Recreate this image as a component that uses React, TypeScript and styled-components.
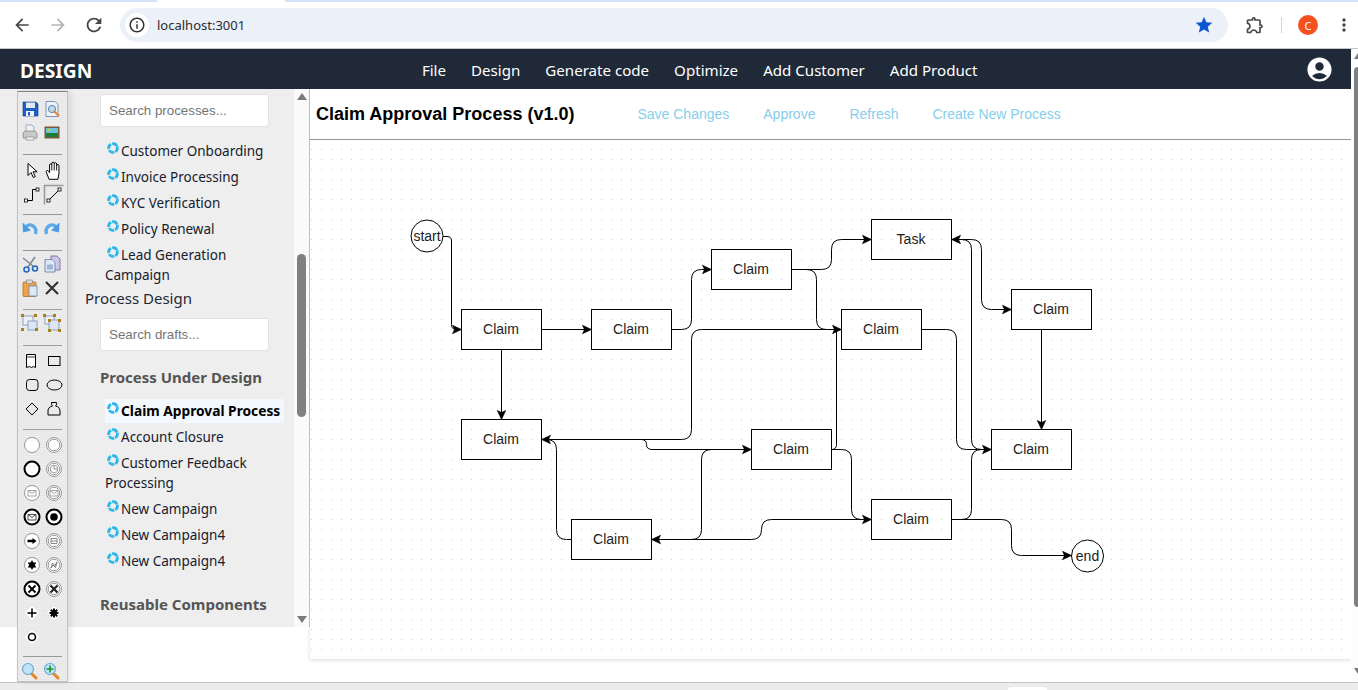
import React from 'react';
import styled, { createGlobalStyle } from 'styled-components';
import {
  MdArrowBack,
  MdArrowForward,
  MdRefresh,
  MdInfoOutline,
  MdStar,
  MdOutlineExtension,
  MdMoreVert,
  MdAccountCircle,
} from 'react-icons/md';

const GlobalStyle = createGlobalStyle`
  html, body {
    margin: 0;
    padding: 0;
    height: 690px;
    overflow: hidden;
    background: #fff;
  }
  * { box-sizing: border-box; }
`;

const NAV_LINKS = ['File', 'Design', 'Generate code', 'Optimize', 'Add Customer', 'Add Product'];
const ACTIONS = ['Save Changes', 'Approve', 'Refresh', 'Create New Process'];
const PROCESSES = [
  'Customer Onboarding',
  'Invoice Processing',
  'KYC Verification',
  'Policy Renewal',
  'Lead Generation Campaign',
];
const DRAFTS = [
  'Claim Approval Process',
  'Account Closure',
  'Customer Feedback Processing',
  'New Campaign',
  'New Campaign4',
  'New Campaign4',
];

/* toolbar icons */
const I = styled.svg.attrs({ viewBox: '0 0 20 20', width: 20, height: 20 })`
  display: block;
  overflow: visible;
`;

const thin = { fill: 'none', stroke: '#9a9a9a', strokeWidth: 1 };
const bold = { fill: 'none', stroke: '#000', strokeWidth: 1 };

const Ev = ({ ring, children }: { ring: 'thin' | 'double' | 'thick'; children?: React.ReactNode }) => (
  <I>
    <circle cx="10" cy="10" r="7.5" fill="#fff" stroke={ring === 'thick' ? '#000' : '#999'} strokeWidth={ring === 'thick' ? 2 : 1} />
    {ring === 'double' && <circle cx="10" cy="10" r="5.8" fill="none" stroke="#999" strokeWidth="1" />}
    {children}
  </I>
);

const Envelope = ({ color }: { color: string }) => (
  <path d="M6 7.5h8v5.5H6zM6 7.5l4 3 4-3" fill="none" stroke={color} strokeWidth="0.9" />
);

const Gw = ({ children }: { children: React.ReactNode }) => (
  <I>
    <path d="M10 2l8 8-8 8-8-8z" fill="#fff" stroke="#e4e4e4" strokeWidth="1" />
    {children}
  </I>
);

const Zoom = ({ plus }: { plus?: boolean }) => (
  <I>
    <path d="M11 12l5 5" stroke="#e8862a" strokeWidth="3" strokeLinecap="round" />
    <circle cx="8" cy="8" r="5.5" fill="#bfe3f7" stroke="#6fa8cf" strokeWidth="1.2" />
    {plus && <path d="M8 4.5v7M4.5 8h7" stroke="#0a9a1e" strokeWidth="1.6" />}
  </I>
);

type ToolRowData = { left?: boolean; icons: React.ReactNode[] };

const TOOL_ROWS: ToolRowData[] = [
  {
    left: true,
    icons: [
      <I key="save">
        <path d="M3 3h13l2 2v12H3z" fill="#1f5fc4" stroke="#123f8c" strokeWidth="0.6" />
        <rect x="6" y="3.5" width="9" height="5.5" fill="#dfe7f2" />
        <rect x="6" y="12" width="8" height="5" fill="#f0f4fa" />
        <rect x="8" y="13" width="2" height="3.5" fill="#1f5fc4" />
      </I>,
      <I key="preview">
        <path d="M4 2.5h9l3 3v12H4z" fill="#eef3fa" stroke="#7f93bb" strokeWidth="1" />
        <circle cx="10" cy="10" r="3.6" fill="#bcd9ee" stroke="#5d86ad" strokeWidth="1" />
        <path d="M12.5 12.5l4 4" stroke="#e8862a" strokeWidth="2" strokeLinecap="round" />
      </I>,
    ],
  },
  {
    left: true,
    icons: [
      <I key="print">
        <path d="M6 2h6l2 2v5H6z" fill="#eef1f6" stroke="#8f9bb0" strokeWidth="0.8" />
        <path d="M3 10l2-2h10l2 2v5H3z" fill="#c9c9c9" stroke="#8a8a8a" strokeWidth="0.8" />
        <path d="M6 14h8v3H6z" fill="#f2f2f2" stroke="#888" strokeWidth="0.7" />
      </I>,
      <I key="image">
        <rect x="2.5" y="3.5" width="15" height="12" fill="#7a5a3a" />
        <rect x="4" y="5" width="12" height="5.5" fill="#6bc3d8" />
        <rect x="4" y="10" width="12" height="4" fill="#1f7a3b" />
        <circle cx="7" cy="7" r="1.2" fill="#f0c020" />
      </I>,
    ],
  },
  {
    icons: [
      <I key="pointer">
        <path d="M6 2.5v12l3-3 2.3 5 2-.9-2.3-4.8h4.2z" fill="#fff" stroke="#000" strokeWidth="1" />
      </I>,
      <I key="hand">
        <g transform="translate(-1 -1.5) scale(1.1)">
          <path
            d="M5.5 18L3 11.5c-.5-1.5 1-2 2-1l1 1.5V5c0-1.5 2-1.5 2 0V3.5c0-1.5 2.2-1.5 2.2 0V4c0-1.5 2.2-1.5 2.2 0v1.5c0-1.3 2.1-1.3 2.1 0V13l-1 5z"
            fill="#fff"
            stroke="#000"
            strokeWidth="0.9"
          />
          <path d="M8 5v5M10.2 4v6M12.4 5v5" stroke="#000" strokeWidth="0.8" />
        </g>
      </I>,
    ],
  },
  {
    icons: [
      <I key="connector">
        <path d="M4 15.5H10.5V4.5H15" {...bold} />
        <rect x="2.5" y="14" width="3" height="3" fill="#fff" stroke="#000" strokeWidth="0.8" />
        <rect x="14" y="3" width="3" height="3" fill="#fff" stroke="#000" strokeWidth="0.8" />
      </I>,
      <I key="diagonal">
        <path d="M0.5 19.5V0.5H19.5" fill="none" stroke="#999" strokeWidth="1.5" />
        <path d="M4.5 15.5L15.5 4.5" {...bold} />
        <rect x="3" y="14" width="3" height="3" fill="#fff" stroke="#000" strokeWidth="0.8" />
        <rect x="14" y="3" width="3" height="3" fill="#fff" stroke="#000" strokeWidth="0.8" />
      </I>,
    ],
  },
  {
    left: true,
    icons: [
      <I key="undo">
        <path d="M15.5 16C17.5 9 11 4.5 6 8.5" fill="none" stroke="#5aa9ea" strokeWidth="3.4" />
        <path d="M2.5 4.5L3 14.5L11 12.5Z" fill="#4a9ce4" />
      </I>,
      <I key="redo">
        <path d="M4.5 16C2.5 9 9 4.5 14 8.5" fill="none" stroke="#5aa9ea" strokeWidth="3.4" />
        <path d="M17.5 4.5L17 14.5L9 12.5Z" fill="#4a9ce4" />
      </I>,
    ],
  },
  {
    left: true,
    icons: [
      <I key="cut">
        <path d="M3 4l10 8M15 3L8 13" stroke="#7d8794" strokeWidth="1.5" />
        <circle cx="15" cy="14.5" r="2.5" fill="none" stroke="#2468c0" strokeWidth="1.6" />
        <circle cx="6.5" cy="15.5" r="2.5" fill="none" stroke="#2468c0" strokeWidth="1.6" />
      </I>,
      <I key="copy">
        <path d="M9 2h6l3 3v11H9z" fill="#cfc6e6" stroke="#7a6aa8" strokeWidth="0.9" />
        <path d="M3 5.5h7l3 3V18H3z" fill="#dfe8f5" stroke="#6f84ad" strokeWidth="0.9" />
        <rect x="5" y="10.5" width="6" height="5" fill="#9fb4d6" />
      </I>,
    ],
  },
  {
    left: true,
    icons: [
      <I key="paste">
        <rect x="3" y="4" width="13" height="14.5" rx="1" fill="#f0a24a" stroke="#b86d1e" strokeWidth="0.8" />
        <rect x="6.5" y="2" width="6" height="3.5" fill="#d9d9d9" stroke="#888" strokeWidth="0.7" />
        <rect x="9" y="8" width="8" height="10" fill="#dfe8f5" stroke="#6f84ad" strokeWidth="0.8" />
      </I>,
      <I key="delete">
        <path d="M4 4l12 12M16 4L4 16" stroke="#333" strokeWidth="2.2" />
      </I>,
    ],
  },
  {
    left: true,
    icons: [
      <I key="group">
        <rect x="3" y="3" width="10" height="9" fill="#eef2f8" stroke="#8fa0bf" strokeWidth="1" />
        <rect x="8" y="8" width="9" height="9" fill="#dce6f4" stroke="#8fa0bf" strokeWidth="1" />
        {[[1, 1], [14, 1], [1, 15], [15, 15]].map(([x, y]) => (
          <rect key={`${x}${y}`} x={x} y={y} width="3" height="3" fill="#a8801a" />
        ))}
      </I>,
      <I key="ungroup">
        <rect x="3" y="3" width="9" height="8" fill="#eef2f8" stroke="#8fa0bf" strokeWidth="1" />
        <rect x="7" y="7" width="10" height="10" fill="#dce6f4" stroke="#8fa0bf" strokeWidth="1" />
        {[[1, 1], [11, 1], [6, 6], [16, 6], [6, 16], [16, 16]].map(([x, y]) => (
          <rect key={`${x}${y}`} x={x} y={y} width="3" height="3" fill="#a8801a" />
        ))}
      </I>,
    ],
  },
  {
    icons: [
      <I key="note">
        <path d="M4.5 3.5h9v13l-2-1-2 1-2-1-3 1z" fill="#fff" stroke="#000" strokeWidth="1" />
        <path d="M4.5 6h9" stroke="#000" strokeWidth="0.8" />
      </I>,
      <I key="rect">
        <rect x="4.5" y="5.5" width="11.5" height="9" {...bold} />
      </I>,
    ],
  },
  {
    icons: [
      <I key="rounded">
        <rect x="4.5" y="4.5" width="11.5" height="11" rx="3" {...bold} />
      </I>,
      <I key="ellipse">
        <ellipse cx="10.5" cy="10" rx="7.5" ry="5" {...bold} />
      </I>,
    ],
  },
  {
    icons: [
      <I key="diamond">
        <path d="M10 4l6 6-6 6-6-6z" {...bold} />
      </I>,
      <I key="actor">
        <path d="M7 3.5h5c.5 2-.5 3-1 3.5 3 .5 4.5 2.5 4.5 5v4h-12v-4c0-2.5 1.5-4.5 4.5-5-.5-.5-1.5-1.5-.5-3.5z" transform="translate(0.5 0)" {...bold} />
      </I>,
    ],
  },
  { icons: [<Ev key="e1" ring="thin" />, <Ev key="e2" ring="double" />] },
  {
    icons: [
      <Ev key="e3" ring="thick" />,
      <Ev key="e4" ring="double">
        <path d="M10 6.5V10h3" fill="none" stroke="#888" strokeWidth="1" />
        <circle cx="10" cy="10" r="3.8" {...thin} />
      </Ev>,
    ],
  },
  {
    icons: [
      <Ev key="e5" ring="thin">
        <Envelope color="#999" />
      </Ev>,
      <Ev key="e6" ring="double">
        <Envelope color="#999" />
      </Ev>,
    ],
  },
  {
    icons: [
      <Ev key="e7" ring="thick">
        <Envelope color="#333" />
      </Ev>,
      <Ev key="e8" ring="thick">
        <circle cx="10" cy="10" r="3.8" fill="#000" />
      </Ev>,
    ],
  },
  {
    icons: [
      <Ev key="e9" ring="thin">
        <path d="M5.5 8.8h5V7l4 3-4 3v-1.8h-5z" fill="#000" />
      </Ev>,
      <Ev key="e10" ring="double">
        <path d="M7 7.5h6v5H7zM7 10h6" fill="none" stroke="#888" strokeWidth="1" />
      </Ev>,
    ],
  },
  {
    icons: [
      <Ev key="e11" ring="thin">
        <path d="M10 5l1.4 2.5 2.9 0-1.5 2.5 1.5 2.5-2.9 0L10 15l-1.4-2.5-2.9 0L7.2 10 5.7 7.5l2.9 0z" fill="#000" />
      </Ev>,
      <Ev key="e12" ring="double">
        <path d="M7 13l1.5-5 2.5 2.5L13 7l-1.5 5.5L9 10z" fill="none" stroke="#777" strokeWidth="1" />
      </Ev>,
    ],
  },
  {
    icons: [
      <Ev key="e13" ring="thick">
        <path d="M6.5 6.5l7 7M13.5 6.5l-7 7" stroke="#000" strokeWidth="1.8" />
      </Ev>,
      <Ev key="e14" ring="double">
        <path d="M6.5 6.5l7 7M13.5 6.5l-7 7" stroke="#222" strokeWidth="2.2" />
      </Ev>,
    ],
  },
  {
    icons: [
      <Gw key="g1">
        <path d="M10 5.5v9M5.5 10h9" stroke="#000" strokeWidth="1.5" />
      </Gw>,
      <Gw key="g2">
        <path d="M10 5.5v9M5.5 10h9M6.8 6.8l6.4 6.4M13.2 6.8l-6.4 6.4" stroke="#000" strokeWidth="2" />
      </Gw>,
    ],
  },
  {
    icons: [
      <Gw key="g3">
        <circle cx="10" cy="10" r="3.5" fill="#fff" stroke="#000" strokeWidth="1.6" />
      </Gw>,
    ],
  },
  { left: true, icons: [<Zoom key="z1" />, <Zoom key="z2" plus />] },
];

/* index of the row under a rule: [gap above the rule, gap below it] */
const RULES: Record<number, [number, number]> = {
  2: [9, 4],
  4: [7, 1],
  5: [10, 1],
  7: [9, 1],
  8: [10, 3],
  11: [8, 3],
  20: [7, 2],
};

/* diagram */
const NODES = [
  { x: 461.5, y: 309.5, label: 'Claim' },
  { x: 591.5, y: 309.5, label: 'Claim' },
  { x: 711.5, y: 249.5, label: 'Claim' },
  { x: 871.5, y: 219.5, label: 'Task' },
  { x: 841.5, y: 309.5, label: 'Claim' },
  { x: 1011.5, y: 289.5, label: 'Claim' },
  { x: 461.5, y: 419.5, label: 'Claim' },
  { x: 751.5, y: 429.5, label: 'Claim' },
  { x: 991.5, y: 429.5, label: 'Claim' },
  { x: 571.5, y: 519.5, label: 'Claim' },
  { x: 871.5, y: 499.5, label: 'Claim' },
];

const EDGES = [
  'M443 236.5H447Q451.5 236.5 451.5 241V324.5Q451.5 329.5 456 329.5H461',
  'M541.5 329.5H591',
  'M501.5 349.5V419',
  'M671.5 329.5H681.5Q691.5 329.5 691.5 319.5V279.5Q691.5 269.5 701.5 269.5H711',
  'M791.5 269.5H821.5Q831.5 269.5 831.5 259.5V249.5Q831.5 239.5 841.5 239.5H871',
  'M791.5 269.5H806.5Q816.5 269.5 816.5 279.5V319.5Q816.5 329.5 826.5 329.5H841',
  'M841.5 329.5H701.5Q691.5 329.5 691.5 339.5V429.5Q691.5 439.5 681.5 439.5H541.5',
  'M831.5 449.5Q836.5 449.5 836.5 444.5V329.5',
  'M541.5 439.5H641Q646.5 439.5 646.5 444.5Q646.5 449.5 652 449.5H751',
  'M571.5 539.5H566.5Q556.5 539.5 556.5 529.5V449.5Q556.5 439.5 546.5 439.5H541.5',
  'M751.5 449.5H711.5Q701.5 449.5 701.5 459.5V529.5Q701.5 539.5 691.5 539.5H651.5',
  'M871.5 519.5H771.5Q761.5 519.5 761.5 529.5Q761.5 539.5 751.5 539.5H651.5',
  'M831.5 449.5H841.5Q851.5 449.5 851.5 459.5V509.5Q851.5 519.5 861.5 519.5H871',
  'M921.5 329.5H946.5Q956.5 329.5 956.5 339.5V439.5Q956.5 449.5 966.5 449.5H991',
  'M951.5 239.5H961.5Q971.5 239.5 971.5 249.5V439.5Q971.5 449.5 981.5 449.5H991',
  'M951.5 239.5H971.5Q981.5 239.5 981.5 249.5V299.5Q981.5 309.5 991.5 309.5H1011',
  'M1041.5 329.5V429',
  'M951.5 519.5H961.5Q971.5 519.5 971.5 509.5V459.5Q971.5 449.5 981.5 449.5H991',
  'M951.5 519.5H1001.5Q1011.5 519.5 1011.5 529.5V545.5Q1011.5 555.5 1021.5 555.5H1071',
];

/* tip x, tip y, rotation in degrees */
const ARROWS: [number, number, number][] = [
  [461.5, 329.5, 0],
  [591.5, 329.5, 0],
  [501.5, 419.5, 90],
  [711.5, 269.5, 0],
  [871.5, 239.5, 0],
  [841.5, 329.5, 0],
  [541.5, 439.5, 180],
  [751.5, 449.5, 0],
  [651.5, 539.5, 180],
  [871.5, 519.5, 0],
  [951.5, 239.5, 180],
  [1011.5, 309.5, 0],
  [1041.5, 429.5, 90],
  [991.5, 449.5, 0],
  [1071.5, 555.5, 0],
];

export default function App() {
  return (
    <Page>
      <GlobalStyle />
      <TabStrip />
      <BrowserBar>
        <RoundButton>
          <MdArrowBack size={20} color="#474747" />
        </RoundButton>
        <RoundButton>
          <MdArrowForward size={20} color="#b4b4b4" />
        </RoundButton>
        <RoundButton>
          <MdRefresh size={22} color="#474747" />
        </RoundButton>
        <AddressPill>
          <InfoBadge>
            <MdInfoOutline size={18} color="#333" />
          </InfoBadge>
          <Url>localhost:3001</Url>
          <MdStar size={20} color="#0b57d0" />
        </AddressPill>
        <Extension>
          <MdOutlineExtension size={20} color="#474747" />
        </Extension>
        <BarDivider />
        <Avatar>C</Avatar>
        <MenuDots>
          <MdMoreVert size={20} color="#474747" />
        </MenuDots>
      </BrowserBar>

      <Viewport>
        <Content>
          <Nav>
            <Logo>DESIGN</Logo>
            <NavLinks>
              {NAV_LINKS.map(link => (
                <NavLink key={link}>{link}</NavLink>
              ))}
            </NavLinks>
            <MdAccountCircle size={29} color="#fff" />
          </Nav>

          <Main>
            <LeftPane>
              <Sidebar>
                <SearchBox placeholder="Search processes..." readOnly />
                <ItemList $top={14}>
                  {PROCESSES.map(name => (
                    <Item key={name}>
                      <ProcessIcon />
                      {name}
                    </Item>
                  ))}
                </ItemList>
                <PanelTitle>Process Design</PanelTitle>
                <SearchBox $top={10} placeholder="Search drafts..." readOnly />
                <SectionTitle $top={15}>Process Under Design</SectionTitle>
                <ItemList $top={13}>
                  {DRAFTS.map((name, i) => (
                    <Item key={`${name}${i}`} $active={i === 0}>
                      <ProcessIcon />
                      {name}
                    </Item>
                  ))}
                </ItemList>
                <SectionTitle $top={22}>Reusable Components</SectionTitle>
              </Sidebar>
              <SideScroll>
                <ArrowUp />
                <SideThumb />
                <ArrowDown />
              </SideScroll>
              <Palette>
                {TOOL_ROWS.map((row, i) => (
                  <React.Fragment key={i}>
                    {RULES[i] && <Rule $above={RULES[i][0]} $below={RULES[i][1]} />}
                    <ToolRow $left={row.left}>
                      {row.icons.map((icon, j) => (
                        <ToolCell key={j}>{icon}</ToolCell>
                      ))}
                    </ToolRow>
                  </React.Fragment>
                ))}
              </Palette>
            </LeftPane>

            <Editor>
              <EditorHeader>
                <ProcessTitle>Claim Approval Process (v1.0)</ProcessTitle>
                <Actions>
                  {ACTIONS.map(action => (
                    <ActionLink key={action}>{action}</ActionLink>
                  ))}
                </Actions>
              </EditorHeader>
              <GraphArea>
                <svg width="1041" height="519" viewBox="310 140 1041 519" style={{ display: 'block' }}>
                  <defs>
                    <pattern id="grid" x="1" y="9" width="10" height="10" patternUnits="userSpaceOnUse">
                      <rect width="1" height="1" fill="#cfcfcf" />
                    </pattern>
                  </defs>
                  <rect x="310" y="140" width="1032" height="519" fill="url(#grid)" />
                  {EDGES.map(d => (
                    <path key={d} d={d} fill="none" stroke="#000" strokeWidth="1" />
                  ))}
                  {ARROWS.map(([x, y, r], i) => (
                    <path key={i} d="M0 0L-9 -4.2L-7 0L-9 4.2Z" transform={`translate(${x} ${y}) rotate(${r})`} fill="#000" stroke="#000" strokeWidth="0.6" />
                  ))}
                  <circle cx="427" cy="236" r="16" fill="#fff" stroke="#000" />
                  <DiagramText x="427" y="241">start</DiagramText>
                  <circle cx="1087.5" cy="556" r="16" fill="#fff" stroke="#000" />
                  <DiagramText x="1087.5" y="561">end</DiagramText>
                  {NODES.map(n => (
                    <g key={`${n.x}-${n.y}`}>
                      <rect x={n.x} y={n.y} width="80" height="40" fill="none" stroke="#000" />
                      <DiagramText x={n.x + 39.5} y={n.y + 24}>{n.label}</DiagramText>
                    </g>
                  ))}
                </svg>
              </GraphArea>
            </Editor>
          </Main>
        </Content>
        <PageScroll>
          <PageArrowUp />
          <PageThumb />
          <PageArrowDown />
        </PageScroll>
      </Viewport>

      <BottomBar>
        <TaskStub />
      </BottomBar>
    </Page>
  );
}

function ProcessIcon() {
  return (
    <ItemGlyph viewBox="0 0 12 12">
      <g transform="rotate(-18 6 6)">
        <circle cx="6" cy="6" r="4.3" fill="none" stroke="#2ab7ea" strokeWidth="2.8" strokeDasharray="5.6 1.15" />
      </g>
    </ItemGlyph>
  );
}

const Page = styled.div`
  width: 1358px;
  height: 690px;
  display: flex;
  flex-direction: column;
  overflow: hidden;
  background: #fff;
  font-family: 'Noto Sans', sans-serif;
`;

const TabStrip = styled.div`
  height: 2px;
  flex-shrink: 0;
  background: linear-gradient(
    to right,
    #d3e3fd 0 157px,
    #fff 157px 285px,
    #d3e3fd 285px
  );
`;

const BrowserBar = styled.div`
  height: 47px;
  flex-shrink: 0;
  display: flex;
  align-items: center;
  padding-left: 4px;
  background: #fff;
  border-bottom: 1px solid #c7c7c7;
`;

const RoundButton = styled.div`
  width: 36px;
  height: 36px;
  display: flex;
  align-items: center;
  justify-content: center;
`;

const AddressPill = styled.div`
  width: 1108px;
  height: 34px;
  margin-left: 8px;
  padding: 0 14px 0 5px;
  display: flex;
  align-items: center;
  background: #ebf0f9;
  border-radius: 17px;
`;

const InfoBadge = styled.div`
  width: 24px;
  height: 24px;
  display: flex;
  align-items: center;
  justify-content: center;
  background: #fff;
  border-radius: 50%;
`;

const Url = styled.span`
  flex: 1;
  margin-left: 8px;
  font-size: 13px;
  color: #2c2c2c;
`;

const Extension = styled.div`
  margin-left: 17px;
  display: flex;
`;

const BarDivider = styled.div`
  width: 1px;
  height: 16px;
  margin-left: 16px;
  background: #c7d8f5;
`;

const Avatar = styled.div`
  width: 20px;
  height: 20px;
  margin-left: 16px;
  display: flex;
  align-items: center;
  justify-content: center;
  border-radius: 50%;
  background: #f4511e;
  color: #fff;
  font-size: 11px;
`;

const MenuDots = styled.div`
  margin-left: 16px;
  display: flex;
`;

const Viewport = styled.div`
  height: 633px;
  flex-shrink: 0;
  display: flex;
`;

const Content = styled.div`
  width: 1351px;
  display: flex;
  flex-direction: column;
`;

const Nav = styled.nav`
  height: 40px;
  flex-shrink: 0;
  display: flex;
  align-items: center;
  justify-content: space-between;
  padding: 0 17px 0 20px;
  background: #1f2937;
`;

const Logo = styled.div`
  padding-top: 2px;
  font-size: 19.2px;
  font-weight: 700;
  color: #fff;
`;

const NavLinks = styled.div`
  display: flex;
  gap: 25px;
  padding: 1px 0 0 2px;
`;

const NavLink = styled.span`
  font-size: 15.1px;
  color: #fff;
`;

const Main = styled.div`
  flex: 1;
  display: flex;
  align-items: flex-start;
`;

const LeftPane = styled.div`
  position: relative;
  width: 310px;
  height: 538px;
  flex-shrink: 0;
  display: flex;
`;

const Sidebar = styled.aside`
  width: 294px;
  padding: 5px 0 0 85px;
  overflow: hidden;
  background: #eeeeee;
`;

const SearchBox = styled.input<{ $top?: number }>`
  display: block;
  width: 169px;
  height: 33px;
  margin: ${props => props.$top ?? 0}px 0 0 15px;
  padding: 0 8px;
  border: 1px solid #e2e2e2;
  border-radius: 3px;
  outline: none;
  background: #fff;
  font-family: 'Liberation Sans', Arial, sans-serif;
  font-size: 13.33px;

  &::placeholder {
    color: #757575;
  }
`;

const ItemList = styled.ul<{ $top: number }>`
  list-style: none;
  width: 179px;
  margin: ${props => props.$top}px 0 0 20px;
  padding: 0;
`;

const Item = styled.li<{ $active?: boolean }>`
  margin-bottom: ${props => (props.$active ? '4px' : '6px')};
  margin-top: ${props => (props.$active ? '-2px' : '0')};
  padding: ${props => (props.$active ? '2px 0' : '0')};
  background: ${props => (props.$active ? '#f2f8fd' : 'transparent')};
  font-size: ${props => (props.$active ? '13.75px' : '13.5px')};
  line-height: 20px;
  font-weight: ${props => (props.$active ? 700 : 400)};
  color: ${props => (props.$active ? '#000' : '#16202e')};
`;

const ItemGlyph = styled.svg`
  display: inline-block;
  width: 12px;
  height: 12px;
  margin: 0 2px;
  vertical-align: 2px;
`;

const PanelTitle = styled.div`
  margin-top: -3px;
  font-size: 15px;
  line-height: 20px;
  color: #1f2937;
`;

const SectionTitle = styled.div<{ $top: number }>`
  margin: ${props => props.$top}px 0 0 15px;
  font-size: 15px;
  line-height: 22px;
  font-weight: 700;
  color: #555;
  white-space: nowrap;
`;

const SideScroll = styled.div`
  position: relative;
  width: 16px;
  display: flex;
  flex-direction: column;
  align-items: center;
  background: #fafafa;
  border-right: 1px solid #bdbdbd;
`;

const ArrowUp = styled.div`
  width: 0;
  height: 0;
  margin-top: 4px;
  border-left: 5px solid transparent;
  border-right: 5px solid transparent;
  border-bottom: 7px solid #7a7a7a;
`;

const ArrowDown = styled.div`
  width: 0;
  height: 0;
  margin-top: 199px;
  border-left: 5px solid transparent;
  border-right: 5px solid transparent;
  border-top: 7px solid #7a7a7a;
`;

const SideThumb = styled.div`
  width: 9px;
  height: 163px;
  margin-top: 154px;
  border-radius: 5px;
  background: #808080;
`;

const Palette = styled.div`
  position: absolute;
  top: 2px;
  left: 17px;
  width: 51px;
  height: 591px;
  padding-top: 5px;
  display: flex;
  flex-direction: column;
  align-items: center;
  border: 1px solid #c2c2c2;
  border-top: 1px solid #808080;
  box-shadow: 3px 0 6px rgba(0, 0, 0, 0.1);
  background: repeating-linear-gradient(to bottom, #ededed 0 1px, #e7e7e7 1px 2px);
`;

const ToolRow = styled.div<{ $left?: boolean }>`
  flex-shrink: 0;
  height: 24px;
  display: grid;
  grid-template-columns: 22px 22px;
  margin-right: ${props => (props.$left ? '4px' : '0')};
`;

const ToolCell = styled.div`
  display: flex;
  align-items: center;
  justify-content: center;
`;

const Rule = styled.div<{ $above: number; $below: number }>`
  flex-shrink: 0;
  width: 39px;
  height: 1px;
  margin: ${props => props.$above}px 0 ${props => props.$below}px;
  background: #9a9a9a;
`;

const Editor = styled.section`
  flex: 1;
  min-width: 0;
  display: flex;
  flex-direction: column;
`;

const EditorHeader = styled.header`
  height: 51px;
  flex-shrink: 0;
  display: flex;
  align-items: center;
  padding-left: 6px;
  border-bottom: 1px solid #9a9a9a;
`;

const ProcessTitle = styled.h1`
  margin: 0;
  font-family: 'Liberation Sans', Arial, sans-serif;
  font-size: 18px;
  font-weight: 700;
  color: #000;
`;

const Actions = styled.div`
  display: flex;
  gap: 34px;
  margin-left: 63px;
`;

const ActionLink = styled.span`
  font-family: 'Liberation Sans', Arial, sans-serif;
  font-size: 14px;
  color: #87ceeb;
`;

const GraphArea = styled.div`
  height: 519px;
  background: #fff;
  box-shadow: 0 1px 4px rgba(0, 0, 0, 0.16);
`;

const DiagramText = styled.text`
  font-family: 'Liberation Sans', Arial, sans-serif;
  font-size: 14px;
  fill: #1c1c1c;
  text-anchor: middle;
`;

const PageScroll = styled.div`
  width: 7px;
  display: flex;
  flex-direction: column;
  padding-left: 3px;
  background: #fdfdfd;
`;

const PageArrowUp = styled.div`
  width: 0;
  height: 0;
  margin-top: 4px;
  border-left: 4px solid transparent;
  border-bottom: 6px solid #7a7a7a;
`;

const PageThumb = styled.div`
  width: 4px;
  height: 540px;
  margin-top: 8px;
  border-radius: 4px 0 0 4px;
  background: #808080;
`;

const PageArrowDown = styled.div`
  width: 0;
  height: 0;
  margin-top: 61px;
  border-left: 4px solid transparent;
  border-top: 6px solid #7a7a7a;
`;

const BottomBar = styled.footer`
  flex: 1;
  display: flex;
  align-items: flex-end;
  padding-left: 1008px;
  background: #ececec;
  border-top: 1px solid #c4c4c4;
`;

const TaskStub = styled.div`
  width: 39px;
  height: 3px;
  background: #fff;
  border-radius: 4px 4px 0 0;
`;
